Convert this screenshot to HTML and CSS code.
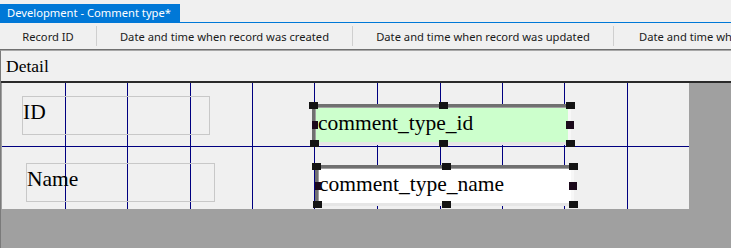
FILE: index.html
```html
<!DOCTYPE html>
<html>
<head>
<meta charset="utf-8">
<link rel="stylesheet" href="styles.css">
</head>
<body>
<div class="tabbar">
  <div class="tab">Development - Comment type*</div>
</div>
<div class="toolbar">
  <div class="col c1">Record ID</div>
  <span class="sep"></span>
  <div class="col c2">Date and time when record was created</div>
  <span class="sep"></span>
  <div class="col c3">Date and time when record was updated</div>
  <span class="sep"></span>
  <div class="col c4">Date and time wh</div>
</div>
<div class="editor">
  <div class="section-header">Detail</div>
  <div class="surface">
    <div class="design">
      <svg class="grid" width="687" height="126" shape-rendering="crispEdges">
        <g stroke="#000080" stroke-width="1">
          <line x1="63.5" y1="0" x2="63.5" y2="126"/>
          <line x1="125.5" y1="0" x2="125.5" y2="126"/>
          <line x1="188.5" y1="0" x2="188.5" y2="126"/>
          <line x1="250.5" y1="0" x2="250.5" y2="126"/>
          <line x1="312.5" y1="0" x2="312.5" y2="126"/>
          <line x1="375.5" y1="0" x2="375.5" y2="126"/>
          <line x1="438.5" y1="0" x2="438.5" y2="126"/>
          <line x1="500.5" y1="0" x2="500.5" y2="126"/>
          <line x1="562.5" y1="0" x2="562.5" y2="126"/>
          <line x1="625.5" y1="0" x2="625.5" y2="126"/>
          <line x1="0" y1="63.5" x2="687" y2="63.5"/>
        </g>
      </svg>
      <div class="label lbl-id">ID</div>
      <div class="label lbl-name">Name</div>
      <div class="field fld-id">
        <span class="value">comment_type_id</span>
        <i class="h tl"></i><i class="h tm"></i><i class="h tr"></i>
        <i class="h ml"></i><i class="h mr"></i>
        <i class="h bl"></i><i class="h bm"></i><i class="h br"></i>
      </div>
      <div class="field fld-name">
        <span class="value">comment_type_name</span>
        <i class="h tl"></i><i class="h tm"></i><i class="h tr"></i>
        <i class="h ml"></i><i class="h mr"></i>
        <i class="h bl"></i><i class="h bm"></i><i class="h br"></i>
      </div>
    </div>
  </div>
</div>
</body>
</html>
```
FILE: styles.css
```css
html, body {
  margin: 0;
  padding: 0;
  background: #f0f0f0;
  width: 731px;
  height: 248px;
  overflow: hidden;
}

.tabbar {
  height: 22px;
  border-bottom: 1px solid #0078d7;
  display: flex;
  align-items: flex-end;
}

.tab {
  width: 173px;
  height: 18px;
  padding-left: 7px;
  background: #0078d7;
  color: #ffffff;
  font-family: "Noto Sans", "Open Sans", sans-serif;
  font-size: 11.2px;
  line-height: 18px;
  white-space: nowrap;
}

.toolbar {
  height: 26px;
  display: flex;
  align-items: center;
  border-bottom: 1px solid #707070;
  overflow: hidden;
  white-space: nowrap;
  font-family: "Noto Sans", "Open Sans", sans-serif;
  font-size: 11.2px;
  color: #1a1a1a;
}

.col {
  flex: none;
  text-align: center;
}

.c1 { width: 96px; }
.c2 { width: 255px; }
.c3 { width: 260px; }
.c4 { text-align: left; padding-left: 25px; }

.sep {
  flex: none;
  width: 1px;
  height: 20px;
  background: #cfcfcf;
}

.editor {
  border-top: 1px solid #a8a8a8;
  border-left: 1px solid #7a7a7a;
  height: 197px;
  display: flex;
  flex-direction: column;
}

.section-header {
  height: 30px;
  border-bottom: 2px solid #2a2a2a;
  padding-left: 5px;
  font-family: "Liberation Serif", "Times New Roman", serif;
  font-size: 17.5px;
  line-height: 30px;
  color: #000;
}

.surface {
  flex: 1;
  background: #a0a0a0;
  margin-left: -1px;
  padding-left: 1px;
  border-left: 1px solid #7a7a7a;
  box-sizing: border-box;
}

.design {
  position: relative;
  width: 687px;
  height: 126px;
  background: #f0f0f0;
  overflow: hidden;
}

.grid {
  position: absolute;
  left: 0;
  top: 0;
}

.label {
  position: absolute;
  box-sizing: border-box;
  height: 39px;
  border: 1px solid #c8c8c8;
  padding: 3px 0 0 0;
  font-family: "Liberation Serif", "Times New Roman", serif;
  font-size: 21.5px;
  line-height: 24px;
  color: #000;
}

.lbl-id { left: 20px; top: 13px; width: 188px; }
.lbl-name { left: 24px; top: 80px; width: 189px; }

.field {
  position: absolute;
  box-sizing: border-box;
  width: 259px;
  height: 41px;
  border-left: 3px solid #707070;
  border-top: 3px solid #707070;
  border-right: 3px solid #f7f7f7;
  border-bottom: 3px solid #e6e6e6;
  box-shadow: inset 1px 1px 0 #a0a0a0;
  padding: 4px 0 0 3px;
  font-family: "Liberation Serif", "Times New Roman", serif;
  font-size: 21.5px;
  line-height: 24px;
  color: #000;
  white-space: nowrap;
}

.fld-id { left: 310px; top: 21px; background: #ccffcc; }
.fld-name { left: 313px; top: 82px; background: #ffffff; padding-left: 1px; }

.h {
  position: absolute;
  width: 9px;
  height: 7px;
  background: #141414;
}

.h.tl { left: -6px; top: -5px; }
.h.tm { left: 124px; top: -5px; }
.h.tr { right: -7px; top: -5px; }
.h.ml { left: -3px; top: 14px; width: 6px; height: 8px; background: #1c0a1c; }
.h.mr { right: -6px; top: 14px; width: 8px; height: 8px; background: #1c0a1c; }
.h.bl { left: -5px; bottom: -5px; }
.h.bm { left: 124px; bottom: -5px; }
.h.br { right: -7px; bottom: -5px; }
```
